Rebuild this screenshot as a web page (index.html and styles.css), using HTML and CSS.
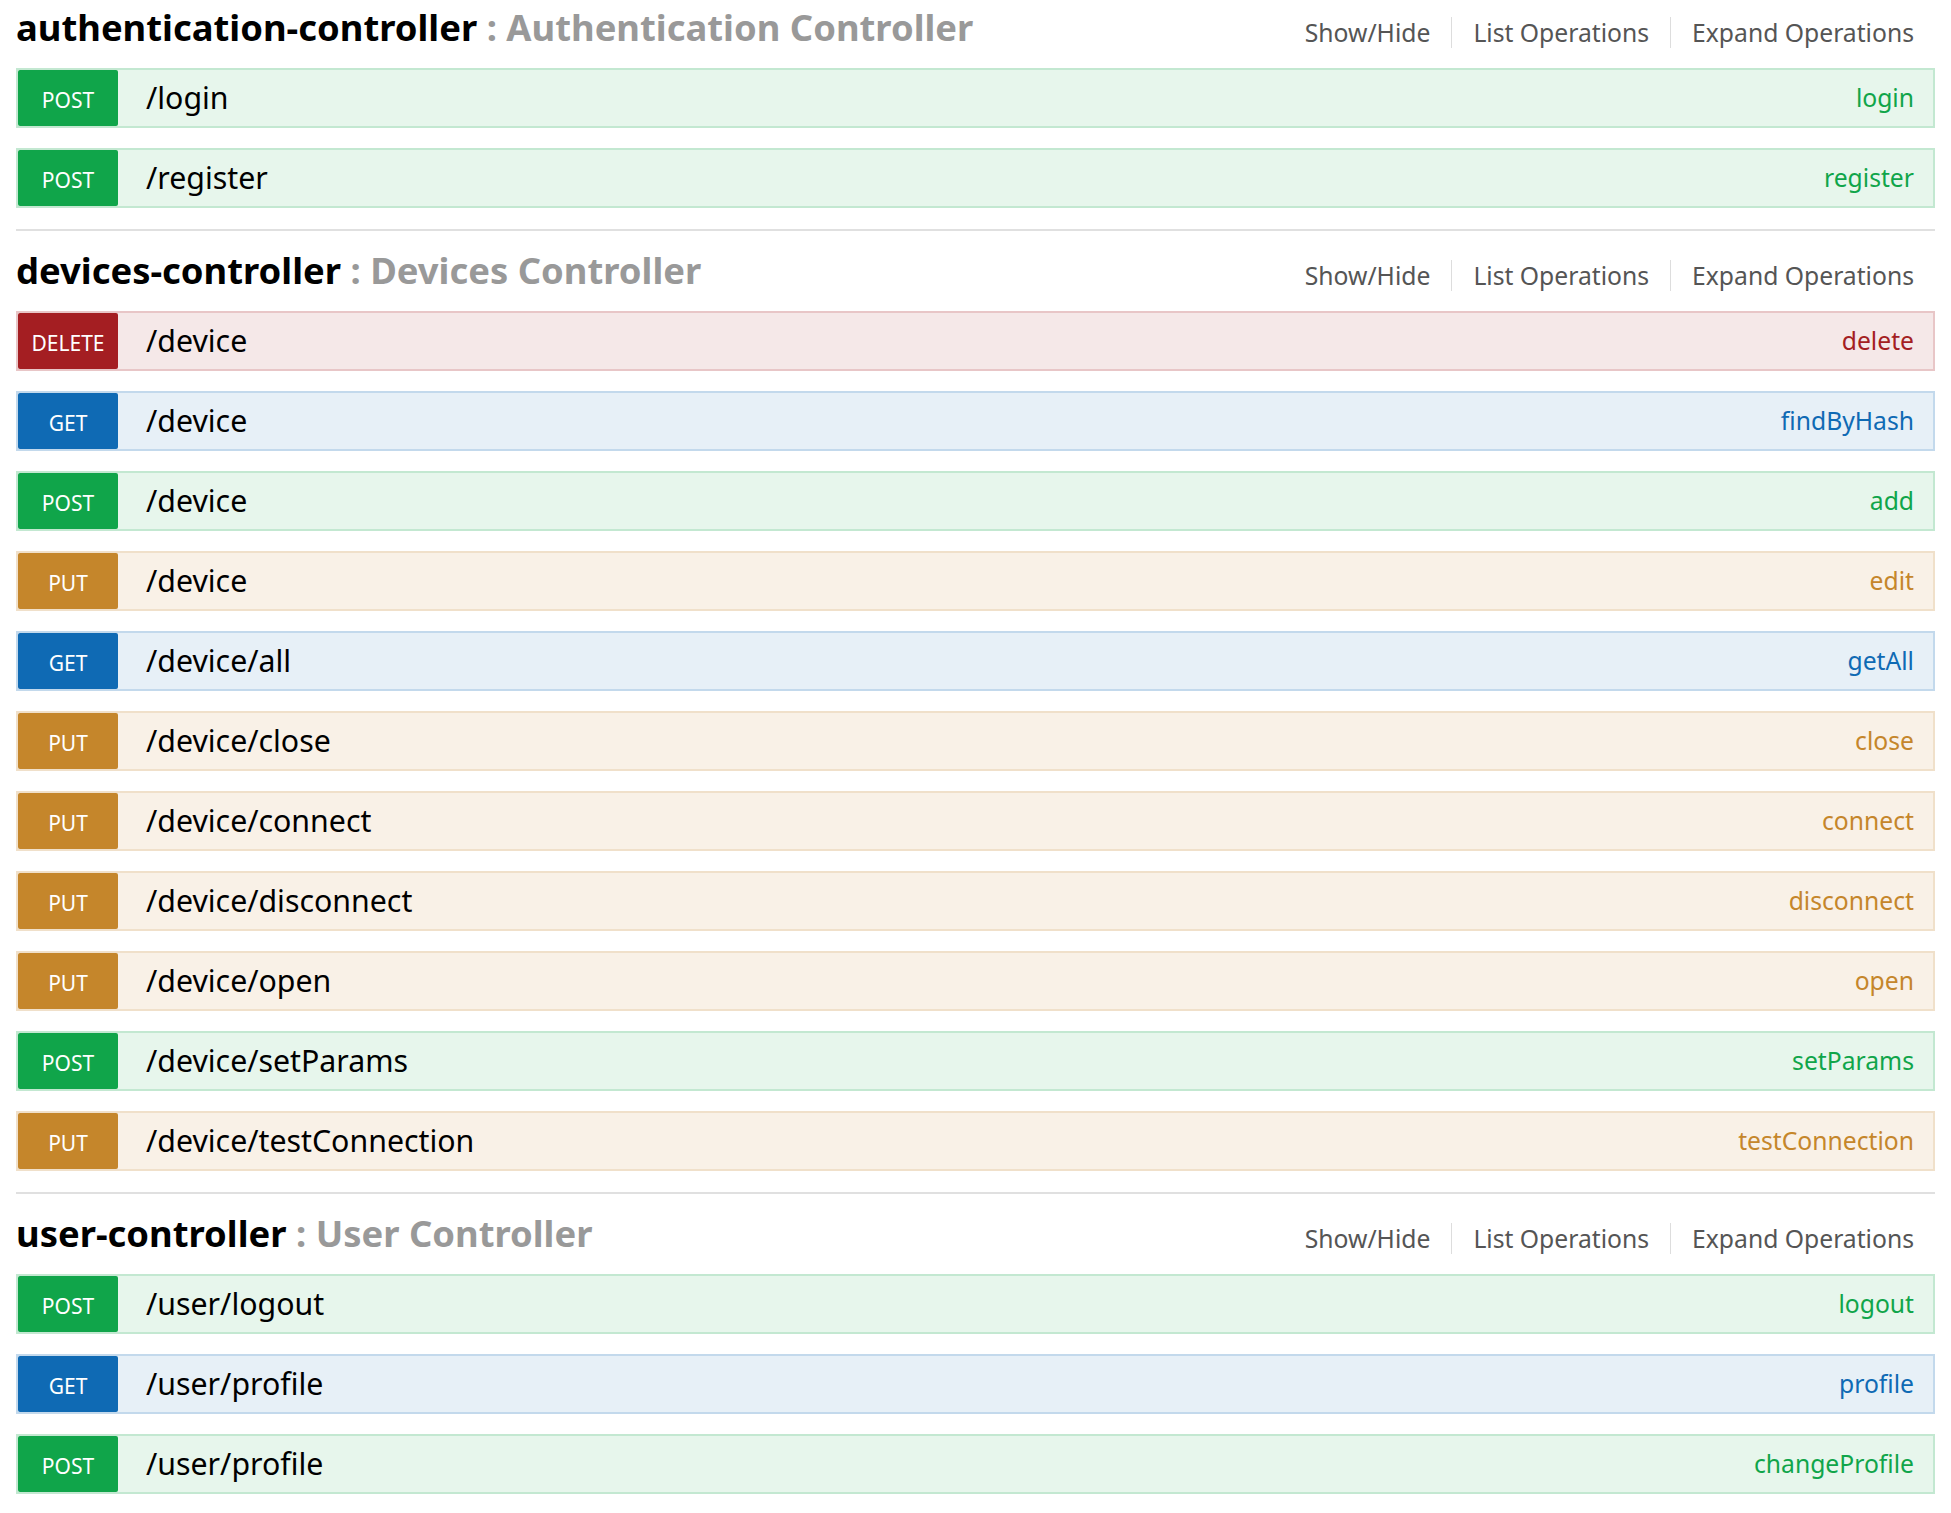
FILE: index.html
```html
<!DOCTYPE html>
<html lang="en">
<head>
<meta charset="utf-8">
<title>API Resources</title>
<link rel="stylesheet" href="styles.css">
</head>
<body>
<ul class="resources">
  <li class="resource">
    <div class="res-heading">
      <h2 class="res-title"><span class="res-name">authentication-controller</span> <span class="res-desc">: Authentication Controller</span></h2>
      <ul class="options">
        <li class="opt">Show/Hide</li>
        <li class="opt">List Operations</li>
        <li class="opt">Expand Operations</li>
      </ul>
    </div>
    <ul class="operations">
      <li class="op op-post"><span class="method">POST</span><span class="path">/login</span><span class="nick">login</span></li>
      <li class="op op-post"><span class="method">POST</span><span class="path">/register</span><span class="nick">register</span></li>
    </ul>
  </li>
  <li class="resource">
    <div class="res-heading">
      <h2 class="res-title"><span class="res-name">devices-controller</span> <span class="res-desc">: Devices Controller</span></h2>
      <ul class="options">
        <li class="opt">Show/Hide</li>
        <li class="opt">List Operations</li>
        <li class="opt">Expand Operations</li>
      </ul>
    </div>
    <ul class="operations">
      <li class="op op-delete"><span class="method">DELETE</span><span class="path">/device</span><span class="nick">delete</span></li>
      <li class="op op-get"><span class="method">GET</span><span class="path">/device</span><span class="nick">findByHash</span></li>
      <li class="op op-post"><span class="method">POST</span><span class="path">/device</span><span class="nick">add</span></li>
      <li class="op op-put"><span class="method">PUT</span><span class="path">/device</span><span class="nick">edit</span></li>
      <li class="op op-get"><span class="method">GET</span><span class="path">/device/all</span><span class="nick">getAll</span></li>
      <li class="op op-put"><span class="method">PUT</span><span class="path">/device/close</span><span class="nick">close</span></li>
      <li class="op op-put"><span class="method">PUT</span><span class="path">/device/connect</span><span class="nick">connect</span></li>
      <li class="op op-put"><span class="method">PUT</span><span class="path">/device/disconnect</span><span class="nick">disconnect</span></li>
      <li class="op op-put"><span class="method">PUT</span><span class="path">/device/open</span><span class="nick">open</span></li>
      <li class="op op-post"><span class="method">POST</span><span class="path">/device/setParams</span><span class="nick">setParams</span></li>
      <li class="op op-put"><span class="method">PUT</span><span class="path">/device/testConnection</span><span class="nick">testConnection</span></li>
    </ul>
  </li>
  <li class="resource">
    <div class="res-heading">
      <h2 class="res-title"><span class="res-name">user-controller</span> <span class="res-desc">: User Controller</span></h2>
      <ul class="options">
        <li class="opt">Show/Hide</li>
        <li class="opt">List Operations</li>
        <li class="opt">Expand Operations</li>
      </ul>
    </div>
    <ul class="operations">
      <li class="op op-post"><span class="method">POST</span><span class="path">/user/logout</span><span class="nick">logout</span></li>
      <li class="op op-get"><span class="method">GET</span><span class="path">/user/profile</span><span class="nick">profile</span></li>
      <li class="op op-post"><span class="method">POST</span><span class="path">/user/profile</span><span class="nick">changeProfile</span></li>
    </ul>
  </li>
</ul>
</body>
</html>
```

FILE: styles.css
```css
* { box-sizing: border-box; }

html, body {
  margin: 0;
  padding: 0;
  background: #ffffff;
}

body {
  padding: 0 16px;
  font-family: "Noto Sans", "Open Sans", "DejaVu Sans", sans-serif;
  color: #000;
}

ul {
  list-style: none;
  margin: 0;
  padding: 0;
}

.resource + .resource {
  border-top: 2px solid #e0e0e0;
  margin-top: 1px;
  padding-top: 12px;
}

.res-heading {
  display: flex;
  justify-content: space-between;
  align-items: flex-start;
  height: 48px;
  margin-bottom: 20px;
}

.res-title {
  margin: 0;
  padding-top: 2px;
  font-size: 36.4px;
  line-height: 50px;
  font-weight: 700;
  white-space: nowrap;
}

.res-name { color: #000; }
.res-desc { color: #999999; }

.options {
  display: flex;
  margin-top: 17px;
}

.opt {
  font-size: 24.7px;
  line-height: 31px;
  color: #555555;
  padding: 0 21px;
  border-left: 1px solid #dddddd;
  white-space: nowrap;
}

.opt:first-child { border-left: none; }

.operations {
  display: flex;
  flex-direction: column;
  gap: 20px;
  padding-bottom: 20px;
}

.op {
  display: flex;
  align-items: center;
  height: 60px;
  border: 2px solid;
  padding-right: 19px;
}

.method {
  flex: 0 0 100px;
  height: 56px;
  border-radius: 2px;
  color: #fff;
  font-size: 21px;
  line-height: 56px;
  padding-top: 2px;
  text-align: center;
}

.path {
  flex: 1 1 auto;
  padding-left: 28px;
  padding-bottom: 2px;
  font-size: 30.3px;
  color: #000;
  white-space: nowrap;
}

.nick {
  font-size: 24.7px;
  padding-bottom: 2px;
  white-space: nowrap;
}

.op-post { background: #e7f6ec; border-color: #c3e8d1; }
.op-post .method { background: #10a54a; }
.op-post .nick { color: #10a54a; }

.op-get { background: #e7f0f7; border-color: #c3d9ec; }
.op-get .method { background: #0f6ab4; }
.op-get .nick { color: #0f6ab4; }

.op-delete { background: #f5e8e8; border-color: #e8c6c7; }
.op-delete .method { background: #a41e22; }
.op-delete .nick { color: #a41e22; }

.op-put { background: #f9f1e7; border-color: #f0e0ca; }
.op-put .method { background: #c5862b; }
.op-put .nick { color: #c5862b; }
```
